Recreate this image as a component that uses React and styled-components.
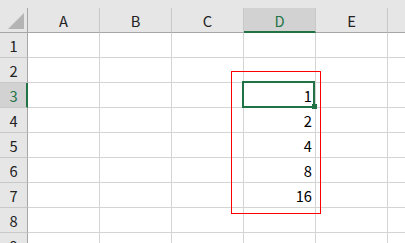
import React from "react";
import styled, { createGlobalStyle, css } from "styled-components";

const GREEN = "#217346";

const Global = createGlobalStyle`
  html, body { margin: 0; padding: 0; background: #ffffff; }
  body { width: 405px; height: 243px; overflow: hidden; }
  * { box-sizing: border-box; }
`;

const Page = styled.div`
  position: relative;
  width: 405px;
  height: 243px;
  overflow: hidden;
  font-family: "Noto Sans CJK JP", "Noto Sans", sans-serif;
  font-size: 14.7px;
  color: #000;
`;

const TopStrip = styled.div`
  height: 8px;
  background: #e6e6e6;
`;

const Sheet = styled.div`
  display: grid;
  grid-template-columns: 28px repeat(6, 72px);
  grid-auto-rows: 25px;
`;

const Corner = styled.div`
  background: #e6e6e6;
  border-right: 1px solid #a6a6a6;
  border-bottom: 1px solid #a6a6a6;
  display: flex;
  align-items: flex-end;
  justify-content: flex-end;
  padding: 0 3px 3px 0;
`;

const ColHeader = styled.div`
  background: ${(p) => (p.$active ? "#d2d2d2" : "#e6e6e6")};
  color: ${(p) => (p.$active ? GREEN : "#222")};
  border-right: 1px solid #c8c8c8;
  border-bottom: ${(p) => (p.$active ? `2px solid ${GREEN}` : "1px solid #a6a6a6")};
  display: flex;
  align-items: center;
  justify-content: center;
  padding-top: ${(p) => (p.$active ? "1px" : "0")};
`;

const RowHeader = styled.div`
  background: ${(p) => (p.$active ? "#d2d2d2" : "#e6e6e6")};
  color: ${(p) => (p.$active ? GREEN : "#222")};
  border-right: ${(p) => (p.$active ? `2px solid ${GREEN}` : "1px solid #a6a6a6")};
  border-bottom: 1px solid #c8c8c8;
  display: flex;
  align-items: center;
  justify-content: center;
  padding-left: ${(p) => (p.$active ? "1px" : "0")};
`;

const Cell = styled.div`
  position: relative;
  border-right: 1px solid #d4d4d4;
  border-bottom: 1px solid #d4d4d4;
  display: flex;
  align-items: center;
  justify-content: flex-end;
  padding-right: 3px;
  ${(p) =>
    p.$selected &&
    css`
      z-index: 2;
    `}
`;

const Selection = styled.div`
  position: absolute;
  left: -2px;
  top: -2px;
  right: 0;
  bottom: -1px;
  border: 2px solid ${GREEN};
  pointer-events: none;
`;

const FillHandle = styled.div`
  position: absolute;
  right: -4px;
  bottom: -3px;
  width: 5px;
  height: 5px;
  background: ${GREEN};
`;

const Annotation = styled.svg`
  position: absolute;
  left: 231px;
  top: 71px;
  width: 90px;
  height: 143px;
  pointer-events: none;
  z-index: 3;
`;

const Value = styled.span`
  position: relative;
  z-index: 4;
`;

const cols = ["A", "B", "C", "D", "E", ""];
const data = { 3: "1", 4: "2", 5: "4", 6: "8", 7: "16" };

export default function App() {
  return (
    <Page>
      <Global />
      <TopStrip />
      <Sheet>
        <Corner>
          <svg width="16" height="16" viewBox="0 0 16 16">
            <polygon points="16,0 16,16 0,16" fill="#b4b4b4" />
          </svg>
        </Corner>
        {cols.map((c, i) => (
          <ColHeader key={i} $active={c === "D"}>
            {c}
          </ColHeader>
        ))}
        {[1, 2, 3, 4, 5, 6, 7, 8, 9].map((r) => (
          <React.Fragment key={r}>
            <RowHeader $active={r === 3}>{r}</RowHeader>
            {cols.map((c, i) => {
              const v = c === "D" ? data[r] : undefined;
              const sel = c === "D" && r === 3;
              return (
                <Cell key={i} $selected={sel}>
                  {v && <Value>{v}</Value>}
                  {sel && (
                    <Selection>
                      <FillHandle />
                    </Selection>
                  )}
                </Cell>
              );
            })}
          </React.Fragment>
        ))}
      </Sheet>
      <Annotation viewBox="0 0 90 143">
        <rect
          x="0.5"
          y="0.5"
          width="89"
          height="142"
          fill="none"
          stroke="#ff0000"
          strokeWidth="1"
          shapeRendering="crispEdges"
        />
      </Annotation>
    </Page>
  );
}
